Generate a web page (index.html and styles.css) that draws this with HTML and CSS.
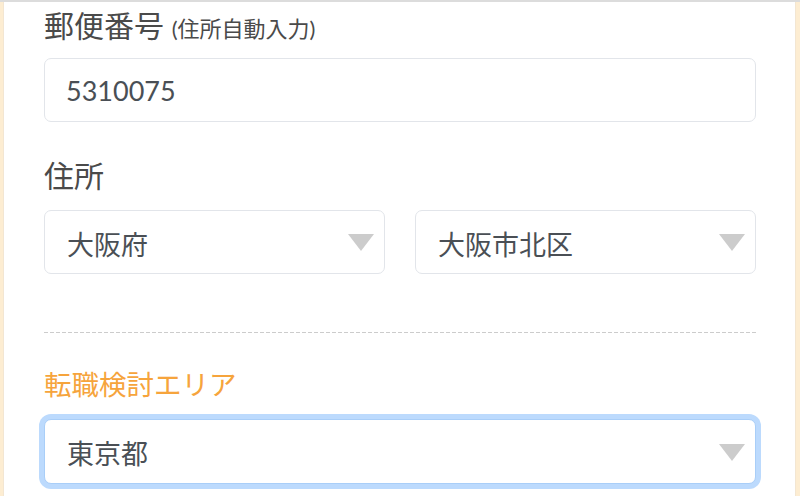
FILE: index.html
```html
<!DOCTYPE html>
<html lang="ja">

<head>
    <meta charset="UTF-8">
    <title>会員登録</title>
    <link rel="stylesheet" href="styles.css">
</head>

<body>
    <div id="form-card">
        <!-- 郵便番号 -->
        <div class="field field-zip">
            <label class="field-label" for="zipInput">郵便番号 <small>(住所自動入力)</small></label>
            <input type="text" id="zipInput" class="text-input" value="5310075">
        </div>

        <!-- 住所 -->
        <div class="field field-address">
            <label class="field-label">住所</label>
            <div class="select-row">
                <div class="select-wrap">
                    <select class="select-input">
                        <option>大阪府</option>
                    </select>
                </div>
                <div class="select-wrap">
                    <select class="select-input">
                        <option>大阪市北区</option>
                    </select>
                </div>
            </div>
        </div>

        <hr class="divider">

        <!-- 転職検討エリア -->
        <div class="field field-area">
            <label class="field-label accent">転職検討エリア</label>
            <div class="select-wrap">
                <select class="select-input is-focused">
                    <option>東京都</option>
                </select>
            </div>
        </div>
    </div>
</body>

</html>
```

FILE: styles.css
```css
/* Basic reset */
html,
body {
    margin: 0;
    padding: 0;
    height: 100%;
    overflow: hidden;
}

body {
    background: #fdedd2;
    border-top: 2px solid #dcdcdc;
    box-sizing: border-box;
    font-family: "Lato", "Noto Sans CJK JP", sans-serif;
    color: #4a4a4a;
}

/* White card between the cream edges */
#form-card {
    margin: 0 4px 0 3px;
    height: 100%;
    padding: 3px 39px 0 40px;
    background: #fff;
    border-left: 1px solid #f3e6d2;
    border-right: 1px solid #f3e6d2;
    box-sizing: border-box;
}

.field-label {
    display: block;
    font-size: 30px;
    line-height: 40px;
    margin-bottom: 13px;
}

.field-label small {
    font-size: 22px;
    line-height: 1;
}

.field-label.accent {
    font-size: 27.5px;
    color: #f6a43c;
}

.field-address {
    margin-top: 33px;
}

.field-address .field-label {
    margin-bottom: 15px;
}

/* Inputs */
.text-input,
.select-input {
    display: block;
    width: 100%;
    height: 64px;
    margin: 0;
    padding: 0 60px 0 22px;
    border: 1px solid #e2e5ea;
    border-radius: 7px;
    background: #fff;
    box-sizing: border-box;
    font-family: inherit;
    font-size: 27px;
    color: #4a4f55;
    outline: none;
    -webkit-appearance: none;
    appearance: none;
}

.text-input {
    padding-left: 21px;
}

.select-input {
    padding-top: 4px;
}

.select-row {
    display: flex;
    gap: 30px;
}

.select-row .select-wrap {
    flex: 1;
}

.select-wrap {
    position: relative;
}

/* Dropdown arrow */
.select-wrap::after {
    content: "";
    position: absolute;
    right: 11px;
    top: 50%;
    margin-top: -8px;
    border-left: 13px solid transparent;
    border-right: 13px solid transparent;
    border-top: 17px solid #cccccc;
    pointer-events: none;
}

.select-input.is-focused {
    height: 65px;
    border-color: #a9cef8;
    box-shadow: 0 0 0 5px #bcdafd;
}

/* Dashed divider */
.divider {
    height: 1px;
    margin: 58px 0 32px;
    border: 0;
    background-image: repeating-linear-gradient(90deg, #cccccc 0 4px, transparent 4px 6px);
}

.field-area .field-label {
    margin-bottom: 14px;
}
```
